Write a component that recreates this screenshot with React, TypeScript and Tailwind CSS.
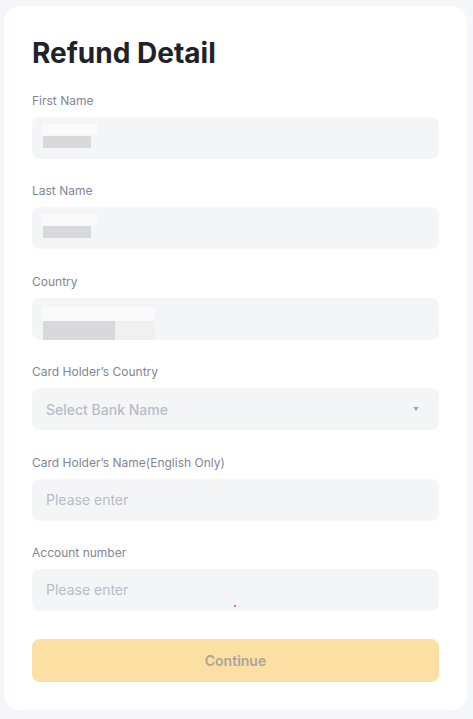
import React from "react";

function Label({ children }: { children: React.ReactNode }) {
  return <div className="mb-2 h-4 text-[12px] leading-4 text-[#7f8793]">{children}</div>;
}

function BlurredInput({ kind }: { kind: "short" | "long" }) {
  if (kind === "short") {
    return (
      <div className="relative h-[42px] rounded-lg bg-[#f4f5f7]">
        <div className="absolute left-[10px] top-[7px] h-[11px] w-[56px] bg-[#fafafa]" />
        <div className="absolute left-[11px] top-[19px] h-[12px] w-[48px] bg-[#d9d9db]" />
      </div>
    );
  }
  return (
    <div className="relative h-[42px] rounded-lg bg-[#f4f5f7]">
      <div className="absolute left-[10px] top-[9px] h-[14px] w-[113px] bg-[#fafafa]" />
      <div className="absolute left-[11px] top-[23px] h-[19px] w-[72px] bg-[#d9d9db]" />
      <div className="absolute left-[83px] top-[23px] h-[19px] w-[40px] bg-[#f0f0f1]" />
    </div>
  );
}

function TextInput({ placeholder }: { placeholder: string }) {
  return (
    <div className="flex h-[42px] items-center rounded-lg bg-[#f4f5f7] px-[14px] text-[14px] text-[#b7bdc6]">
      {placeholder}
    </div>
  );
}

export default function App() {
  return (
    <div
      className="min-h-[719px] w-[473px] bg-[#f5f6fa] pl-[4px] pt-[6px]"
      style={{ fontFamily: "Inter, 'Noto Sans', sans-serif" }}
    >
      <div className="relative w-[463px] rounded-[16px] bg-white px-[28px] pb-[28px] pt-[29px]">
        <h1 className="text-[28px] font-bold leading-9 text-[#1e2329]">Refund Detail</h1>

        <div className="mt-[22px] flex w-[407px] flex-col gap-[24.4px]">
          <div>
            <Label>First Name</Label>
            <BlurredInput kind="short" />
          </div>
          <div>
            <Label>Last Name</Label>
            <BlurredInput kind="short" />
          </div>
          <div>
            <Label>Country</Label>
            <BlurredInput kind="long" />
          </div>
          <div>
            <Label>Card Holder’s Country</Label>
            <div className="flex h-[42px] items-center justify-between rounded-lg bg-[#f4f5f7] px-[14px] text-[14px] font-medium text-[#b7bdc6]">
              <span>Select Bank Name</span>
              <svg width="8" height="6" viewBox="0 0 8 6" className="mr-[5px]">
                <path d="M1 1h6L4 5z" fill="#9ea4ac" />
              </svg>
            </div>
          </div>
          <div>
            <Label>Card Holder’s Name(English Only)</Label>
            <TextInput placeholder="Please enter" />
          </div>
          <div>
            <Label>Account number</Label>
            <TextInput placeholder="Please enter" />
          </div>
        </div>

        <button className="mt-[28px] flex h-[43px] w-[407px] items-center justify-center rounded-lg bg-[#fcdfa3] text-[14px] font-semibold text-[#aba69c]">
          Continue
        </button>

        <div className="absolute left-[230px] top-[599px] h-[2px] w-[2px] rounded-full bg-[#ee22cc]" />
      </div>
    </div>
  );
}
